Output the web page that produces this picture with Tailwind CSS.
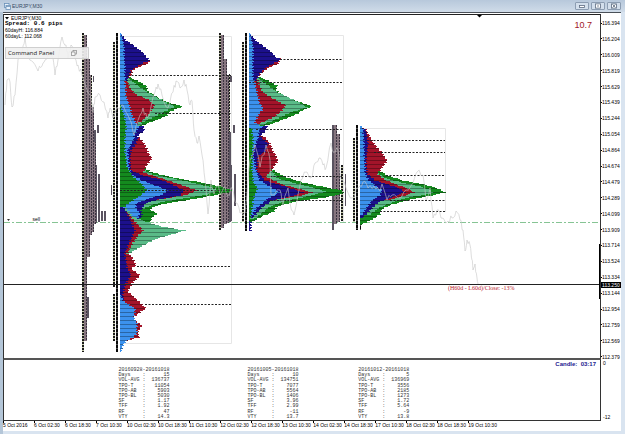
<!DOCTYPE html>
<html lang="en">
<head>
  <meta charset="UTF-8" />
  <meta name="viewport" content="width=device-width, initial-scale=1" />
  <title>EURJPY,M30</title>
  <script src="https://cdn.jsdelivr.net/npm/@tailwindcss/browser@4"></script>
</head>
<body class="h-screen flex flex-col overflow-hidden bg-[#d5e1ee] font-['Liberation_Sans',Arial,sans-serif] text-[5px] leading-[5px] text-black">

  <!-- Title bar -->
  <header class="h-3 shrink-0 flex items-center justify-between pl-2 pr-1 bg-linear-to-b from-[#b7c8db] to-[#d0dce9]">
    <div class="-ml-1 flex items-center gap-px">
      <svg class="w-[7px] h-[7px]" viewBox="0 0 7 7" fill="#e8f1fa" stroke="#6a91b8" stroke-width="0.8">
        <rect x="0.5" y="0.5" width="4.5" height="4" />
        <rect x="2" y="2.5" width="4.5" height="4" />
        <path d="M2 3.5h4.5" />
      </svg>
      <h1 class="text-[5px] leading-[6px] text-[#33475e]">EURJPY,M30</h1>
    </div>
    <div class="flex gap-0.5">
      <button aria-label="Minimize" class="w-3.5 h-2 flex items-center justify-center border border-[#8c9db2] rounded-[1px] bg-[#d3dfec]">
        <svg class="w-[6px] h-[6px]" viewBox="0 0 6 6" fill="#fff" stroke="#5d6c80" stroke-width="0.8"><rect x="0.5" y="2.5" width="5" height="2" /></svg>
      </button>
      <button aria-label="Maximize" class="w-3.5 h-2 flex items-center justify-center border border-[#8c9db2] rounded-[1px] bg-[#d3dfec]">
        <svg class="w-[6px] h-[6px]" viewBox="0 0 6 6" fill="#fff" stroke="#5d6c80" stroke-width="0.8"><rect x="0.5" y="0.9" width="5" height="4.2" /><path d="M2 3h2" /></svg>
      </button>
      <button aria-label="Close" class="w-3.5 h-2 flex items-center justify-center border border-[#8c9db2] rounded-[1px] bg-[#d3dfec]">
        <svg class="w-[6px] h-[6px]" viewBox="0 0 6 6" fill="#fff" stroke="#5d6c80" stroke-width="0.8"><rect x="0.5" y="0.9" width="5" height="4.2" /><path d="M1.5 1.5l3 3M4.5 1.5l-3 3" /></svg>
      </button>
    </div>
  </header>

  <div class="flex-1 min-h-0 flex pr-1 pb-[3px] border-l-[3px] border-[#b4c6d8] bg-[#d9e4f0]">
    <main class="flex-1 grid grid-cols-[minmax(0,1fr)_20px] grid-rows-[minmax(0,1fr)_61px_10px] pt-px border-t border-[#4a5058] bg-white">

      <!-- Price chart -->
      <section class="relative border-t border-x border-b-2 border-t-[#222] border-x-[#333] border-b-[#555]">
        <svg id="chart" class="absolute inset-0 w-full h-full" viewBox="4 15 596 343" preserveAspectRatio="none"></svg>

        <div class="relative flex justify-between">
          <div class="pl-px">
            <p class="flex items-center gap-0.5 text-[5px] leading-[6px]">
              <svg class="w-1 h-[3px]" viewBox="0 0 4 3"><path d="M0 0h4L2 2.6z" /></svg>EURJPY,M30
            </p>
            <p class="font-['Liberation_Mono',monospace] text-[6px] leading-[6px] font-bold">Spread: 0.6 pips</p>
            <p class="leading-[6px]">60dayH: 116.884</p>
            <p class="leading-[6px]">60dayL: 112.068</p>
          </div>
          <p class="pr-2 pt-1 text-[9px] leading-3 text-[#a01828]">10.7</p>
        </div>

        <div class="absolute left-px top-8 w-[84px] h-3 pl-0.5 pr-[11px] flex items-center justify-between border border-[#cfcfcf] bg-[#efefef]/90">
          <span class="font-['Open_Sans',sans-serif] text-[6px] leading-[8px] text-[#222]">Command Panel</span>
          <button aria-label="Restore panel">
            <svg class="w-[6px] h-[6px]" viewBox="0 0 6 6" fill="#f6f6f6" stroke="#888" stroke-width="0.7"><rect x="2" y="0.5" width="3.5" height="3.5" /><rect x="0.5" y="2" width="3.5" height="3.5" /></svg>
          </button>
        </div>

        <span class="absolute left-[4.8%] top-[59%]">sell</span>
        <span class="absolute left-[74.5%] top-[78.7%] font-['Liberation_Serif',serif] text-[6px] leading-[6px] text-[#b8202c]">(H60d - L60d)/Close: -13%</span>
      </section>

      <!-- Price scale -->
      <aside class="relative">
        <ol id="prices" class="h-full flex flex-col justify-between pt-1.5"></ol>
        <span class="absolute left-0 right-0 top-[77.5%] pl-px leading-[6px] bg-black text-white">113.250</span>
      </aside>

      <!-- Indicator pane -->
      <section class="relative border-x border-b border-[#333]">
        <p class="absolute right-1 top-px text-[6px] leading-[6px] font-bold text-[#1c1890]">Candle:&nbsp; 03:17</p>
        <div id="stats" class="h-full pt-2 pl-[19.2%] grid grid-cols-[26.8%_23%_1fr]"></div>
      </section>
      <aside class="flex flex-col justify-between pl-0.5 py-px">
        <span>0</span>
        <span>-12</span>
      </aside>

      <!-- Time scale -->
      <ol id="times" class="w-[83%] grid grid-cols-16 whitespace-nowrap"></ol>
    </main>
  </div>

  <script>
    const BLUE = '#3c92ee', NAVY = '#1c108c', RED = '#a3142a', AQUA = '#5abb88', GREEN = '#148a1e';

    // Each layer is a colour and its right edge as [y, x] points, outermost first
    const profiles = [
      { x: 120, layers: [
        [GREEN, [[76,128],[80,137],[84,144],[86,147],[90,147],[96,156],[102,168],[106,183],[108,177],[112,169],[115,167],[119,158],[123,147],[128,137],[133,129]]],
        [AQUA, [[76,127],[84,136],[92,148],[98,159],[102,166],[106,175],[110,167],[116,155],[122,142],[130,140],[134,128]]],
        [RED, [[80,127],[88,130],[94,136],[99,148],[105,155],[109,152],[114,149],[120,142],[125,135],[132,129]]],
        [RED, [[60,150],[63,148],[66,140],[68,136],[70,133],[74,131],[78,128]]],
        [NAVY, [[33,121],[40,126],[46,135],[52,143],[57,147],[60,150],[62,144],[66,137],[70,131],[76,129],[80,127]]],
        [GREEN, [[166,143],[171,150],[174,160],[178,178],[182,202],[186,220],[190,232],[192,228],[196,208],[200,185],[203,166],[206,154],[209,150],[213,157],[217,152],[221,151],[225,138]]],
        [AQUA, [[168,141],[174,153],[178,173],[183,196],[187,212],[190,217],[194,208],[198,183],[202,160],[206,148],[210,140]]],
        [RED, [[135,137],[140,142],[146,146],[152,148],[158,152],[163,148],[168,145],[172,143],[178,162],[184,180],[190,197],[194,188],[199,160],[203,142]]],
        [NAVY, [[126,143],[130,145],[134,139],[140,137],[145,135],[150,131],[160,130],[170,131],[175,143],[179,160],[184,172],[190,184],[195,180],[199,158],[203,145],[210,141],[215,142],[221,138]]],
        [BLUE, [[33,121],[45,124],[75,125],[95,126],[107,130],[115,132],[127,139],[131,136],[140,133],[150,128],[168,129],[174,132],[180,142],[186,158],[190,168],[194,163],[198,149],[203,136],[208,136],[213,140],[218,138]]],
        [GREEN, [[105,120],[115,124],[125,126],[140,125],[150,125],[166,127],[175,132],[183,141],[190,147],[196,139],[203,128],[208,123]]],
        [AQUA, [[208,126],[216,133],[222,148],[226,162],[230,185],[233,175],[238,157],[245,143],[252,131],[256,126]]],
        [RED, [[212,128],[218,132],[223,137],[230,143],[235,138],[242,133],[250,129],[253,127],[256,132],[265,136],[268,131],[275,140],[283,132],[291,128],[300,138],[308,146],[313,138],[318,133],[325,142],[331,138],[337,139],[340,128]]],
        [NAVY, [[207,124],[214,128],[223,132],[230,135],[240,130],[253,125],[267,127],[275,131],[283,126],[293,123],[300,124]]],
        [BLUE, [[295,121],[300,123],[305,130],[308,135],[317,134],[323,137],[333,137],[337,133],[340,127],[345,123],[351,121]]],
      ]},
      { x: 249, layers: [
        [GREEN, [[76,258],[80,268],[85,277],[90,276],[96,286],[101,298],[106,312],[110,302],[113,298],[118,286],[123,273],[126,262]]],
        [AQUA, [[76,257],[85,268],[92,278],[98,291],[103,301],[107,307],[112,290],[118,278],[125,261],[130,254]]],
        [RED, [[58,280],[63,279],[66,271],[70,265],[74,260],[78,257],[91,262],[98,273],[105,286],[110,282],[116,275],[123,260],[128,252]]],
        [NAVY, [[33,250],[40,256],[46,264],[52,272],[56,275],[59,281],[62,275],[67,266],[73,260],[80,256]]],
        [GREEN, [[168,271],[173,279],[177,287],[182,303],[186,322],[190,342],[193,343],[197,325],[201,296],[206,277],[211,274],[216,262],[221,253]]],
        [AQUA, [[126,263],[130,258],[168,270],[178,278],[183,296],[187,313],[191,326],[196,307],[201,284],[206,270],[212,263],[218,255]]],
        [RED, [[136,264],[143,270],[150,273],[160,278],[166,274],[170,271],[176,266],[184,282],[188,298],[192,312],[195,301],[200,272]]],
        [NAVY, [[126,267],[130,266],[136,260],[143,268],[150,266],[156,258],[170,257],[180,265],[185,282],[189,294],[192,303],[196,290],[200,272],[207,262],[217,253]]],
        [BLUE, [[33,250],[45,253],[75,253],[92,257],[101,259],[108,263],[115,258],[122,255],[126,262],[130,260],[140,257],[153,253],[170,256],[180,260],[185,268],[192,280],[198,268],[207,257],[217,251]]],
        [GREEN, [[128,252],[140,253],[166,252],[180,253],[188,257],[200,253],[222,250]]],
        [NAVY, [[221,251],[230,251]]],
      ]},
      { x: 360, layers: [
        [GREEN, [[168,377],[171,381],[175,388],[180,403],[184,424],[188,438],[192,445],[195,432],[199,411],[204,392],[208,383],[214,380],[219,372],[224,362]]],
        [AQUA, [[172,377],[178,386],[182,402],[186,420],[190,431],[193,432],[197,408],[202,392],[208,378],[214,370]]],
        [RED, [[128,365],[136,370],[143,374],[150,380],[160,387],[166,383],[173,377],[179,384],[184,396],[188,408],[192,414],[195,405],[199,392]]],
        [NAVY, [[126,361],[130,366],[143,368],[160,366],[173,367],[180,375],[184,388],[188,400],[192,405],[197,391],[202,378],[208,372],[217,363]]],
        [BLUE, [[126,361],[128,363],[143,364],[173,365],[180,369],[185,375],[190,382],[195,380],[200,372],[207,367],[214,362]]],
      ]},
    ];

    // TPO columns: x, top, bottom, width, style
    const columns = [
      [82,33,352,2,'dot'],[84,35,341,3,'tpo'],[87,59,257,3,'tpo'],[87,297,318,2,'bar'],[90,75,235,2,'tpo'],[91,75,107,1,'dot'],
      [92,107,232,2,'tpo'],[94,132,224,2,'tpo'],[96,165,223,1,'bar'],[98,174,222,2,'bar'],[101,211,221,2,'bar'],[104,211,221,2,'bar'],[94,130,142,2,'bar'],
      [97,125,133,2,'bar'],[93,76,82,1,'bar'],[111,185,195,1,'bar'],
      [113,42,287,2,'dot'],[113,294,341,2,'dot'],[116,33,352,2,'solid'],
      [219,33,230,2,'dot'],[221,35,228,3,'tpo'],[224,59,224,3,'tpo'],[227,75,223,2,'tpo'],[229,74,222,1,'dot'],[229,132,222,2,'bar'],[231,165,221,1,'bar'],[234,174,206,2,'bar'],[233,125,133,2,'bar'],[230,76,82,2,'bar'],
      [242,42,222,2,'dot'],[245,33,231,2,'solid'],
      [332,125,230,2,'bar'],[334,125,224,3,'tpo'],[337,134,222,3,'tpo'],[341,165,221,2,'dot'],[345,174,206,1,'bar'],
      [353,138,222,2,'dot'],[356,125,230,2,'solid'],[360,222,230,1,'solid'],
    ];

    // Dashed levels: x1, x2, y
    const levels = [
      [128,231,75.5],[155,231,113.5],[120,231,190.5],[137,231,266.5],[145,231,304.5],
      [280,343,59.5],[249,343,82.5],[256,343,129.5],[270,343,176.5],[270,343,200.5],
      [370,445,140.5],[374,445,152.5],[386,445,175.5],[390,445,200.5],[380,445,211.5],
    ];

    const price = '5,105 7,80 10,82 12,107 15,95 18,60 22,52 25,38 28,55 33,62 38,71 42,66 45,60 50,50 53,58 55,75 58,60 62,37 66,45 68,58 71,45 75,58 78,65 82,75 90,95 93,112 95,97 100,95 104,102 108,118 110,108 113,118 117,107 123,105 130,120 134,135 140,115 143,108 147,118 150,112 155,92 158,84 162,95 168,108 173,92 176,81 180,88 184,80 187,90 190,105 192,101 194,130 197,143 199,136 202,155 205,180 208,214 211,180 214,194 217,186 221,194 225,187 228,196 232,188 236,203 240,213 245,212 250,160 255,145 260,167 266,145 270,160 271,195 280,190 283,205 288,188 290,203 294,215 300,185 303,176 307,172 311,178 315,163 319,158 323,165 326,168 331,143 334,152 338,150 341,180 346,188 352,198 358,188 363,182 368,188 374,186 379,190 382,184 387,200 392,195 399,198 406,190 413,183 417,172 423,175 426,200 430,188 433,218 437,210 441,218 448,221 452,218 456,211 460,220 463,230 465,251 467,240 470,245 472,260 473,270 475,264 477,278 478,284';

    function edge(points, y) {
      for (let i = 1; i < points.length; i++) {
        const [y1, x1] = points[i - 1], [y2, x2] = points[i];
        if (y >= y1 && y <= y2) return x1 + (x2 - x1) * (y - y1) / (y2 - y1);
      }
      return null;
    }

    function drawProfile({ x, layers }) {
      let out = '';
      const outer = {};
      for (const [color, points] of layers) {
        let d = '';
        for (let y = points[0][0]; y <= points[points.length - 1][0]; y++) {
          let right = edge(points, y);
          if (right === null) continue;
          right = Math.max(x + 1, Math.round(right + Math.sin(y * 2.3)));
          d += `M${x} ${y}H${right}v1H${x}z`;
          outer[y] = Math.max(outer[y] || 0, right);
        }
        out += `<path d="${d}" fill="${color}"/>`;
      }
      const rows = Object.keys(outer).filter(y => y % 4 === 0).map(y => `M${x} ${y}H${outer[y]}v1H${x}z`).join('');
      return out + `<path d="${rows}" fill="#000" fill-opacity="0.3"/>`;
    }

    function drawColumn([x, top, bottom, w, style]) {
      const line = (color, dash) => `<path d="M${x + w / 2} ${top}V${bottom}" stroke="${color}" stroke-width="${w}"${dash ? ` stroke-dasharray="${dash}"` : ''}/>`;
      if (style === 'dot') return line('#c4c8a8') + line('#1a1a1a', '2 1');
      if (style === 'tpo') return line('#86757f') + `<path d="M${x + w - 0.5} ${top}V${bottom}" stroke="#3a3340" stroke-dasharray="2 1"/>`;
      if (style === 'solid') return line('#555') + line('#080808', '3 1');
      return line('#5a5360');
    }

    // Adds small swings between the main turning points
    function roughen(text) {
      const pts = text.split(' ').map(p => p.split(',').map(Number));
      const out = [pts[0]];
      for (let i = 1; i < pts.length; i++) {
        const [x1, y1] = pts[i - 1], [x2, y2] = pts[i];
        out.push([x1 + (x2 - x1) * 0.35, y1 + (y2 - y1) * 0.35 + 3 * Math.sin(i * 5)]);
        out.push([x1 + (x2 - x1) * 0.7, y1 + (y2 - y1) * 0.7 - 3 * Math.cos(i * 3)]);
        out.push([x2, y2]);
      }
      return out.map(([x, y]) => `${x.toFixed(1)},${y.toFixed(1)}`).join(' ');
    }

    document.getElementById('chart').innerHTML = `
      <g fill="none" stroke="#e6e6e6"><path d="M120 36.500H231.500V343.500H120M249 35.500H343.500V223M360 128.500H445.500V212"/></g>
      <path d="M4 222.500H600" stroke="#86c494" stroke-dasharray="6 2 2 2"/>
      <path d="M7 219h3l-1.500 2z" fill="#333"/>
      ${columns.map(drawColumn).join('')}
      ${profiles.map(drawProfile).join('')}
      <g stroke="#222" stroke-dasharray="2 1.500">${levels.map(([a, b, y]) => `<path d="M${a} ${y}H${b}"/>`).join('')}</g>
      <polyline points="${roughen(price)}" fill="none" stroke="#c6c6c6" stroke-width="0.6"/>
      <path d="M4 284.500H600" stroke="#222"/>
      <path d="M599.500 244V299" stroke="#000"/>
      <path d="M477 15h5l-2.500 2.500z"/>`;

    const prices = ['116.394','116.204','116.009','115.819','115.629','115.439','115.244','115.054','114.864','114.674','114.479','114.289','114.099','113.909','113.714','113.524','113.334','113.144','112.954','112.759','112.569','112.379'];
    document.getElementById('prices').innerHTML = prices.map(p => `
      <li class="flex items-center leading-[6px]"><i class="w-px h-px bg-black"></i>${p}</li>`).join('');

    const times = ['5 Oct 2016','6 Oct 02:30','6 Oct 18:30','7 Oct 10:30','10 Oct 02:30','10 Oct 18:30','11 Oct 10:30','12 Oct 02:30','12 Oct 18:30','13 Oct 10:30','14 Oct 02:30','14 Oct 18:30','17 Oct 10:30','18 Oct 02:30','18 Oct 18:30','19 Oct 10:30'];
    document.getElementById('times').innerHTML = times.map(t => `
      <li><i class="block w-px h-0.5 bg-black"></i>${t}</li>`).join('');

    const names = ['Days','VOL-AVG','TPO-T','TPO-AB','TPO-BL','SF','TFF','RF','VTY'];
    const stats = [
      ['20160928-20161018', ['15','136737','11054','5903','5030','1.17','1.92','47','14.3']],
      ['20161005-20161018', ['10','134751','7077','5564','1406','3.96','2.99','-11','13.7']],
      ['20161012-20161018', ['5','136969','3556','2185','1273','1.72','5.64','-9','13.8']],
    ];
    document.getElementById('stats').innerHTML = stats.map(([range, values]) => `
      <table class="w-[51px] font-['Liberation_Mono',monospace] text-[5px] leading-[5px] text-[#333]">
        <caption class="text-left">${range}</caption>
        ${names.map((n, i) => `<tr><th class="p-0 w-6 text-left font-normal">${n}</th><td class="p-0">:</td><td class="p-0 text-right">${values[i]}</td></tr>`).join('')}
      </table>`).join('');
  </script>
</body>
</html>
